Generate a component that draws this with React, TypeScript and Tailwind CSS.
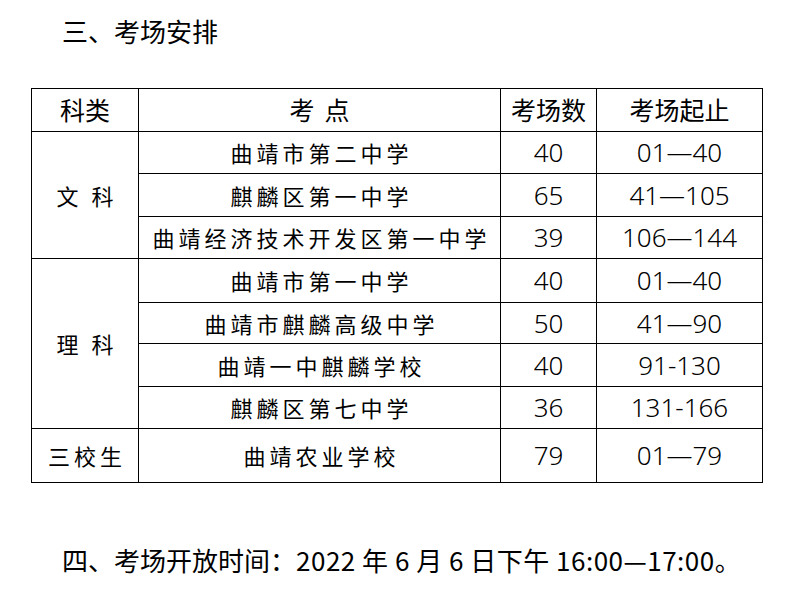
import React from "react";

type Row = { school: string; count: string; range: string };

const groups: { name: string; rows: Row[]; heights: number[] }[] = [
  {
    name: "文 科",
    rows: [
      { school: "曲靖市第二中学", count: "40", range: "01—40" },
      { school: "麒麟区第一中学", count: "65", range: "41—105" },
      { school: "曲靖经济技术开发区第一中学", count: "39", range: "106—144" },
    ],
    heights: [42, 43, 42],
  },
  {
    name: "理 科",
    rows: [
      { school: "曲靖市第一中学", count: "40", range: "01—40" },
      { school: "曲靖市麒麟高级中学", count: "50", range: "41—90" },
      { school: "曲靖一中麒麟学校", count: "40", range: "91-130" },
      { school: "麒麟区第七中学", count: "36", range: "131-166" },
    ],
    heights: [44, 41, 43, 42],
  },
  {
    name: "三校生",
    rows: [{ school: "曲靖农业学校", count: "79", range: "01—79" }],
    heights: [54],
  },
];

const hei = { fontFamily: '"Noto Sans CJK SC", sans-serif' };
// thin digits, like the light face in the screenshot
const digits = { fontFamily: '"Noto Sans", "Noto Sans CJK SC", sans-serif', fontWeight: 300 };

export default function App() {
  return (
    <div className="w-[788px] h-[606px] bg-white text-black" style={hei}>
      <h1 className="pl-[62px] pt-[14px] text-[26px] leading-[34px] font-normal">三、考场安排</h1>

      <table className="ml-[31px] mt-[40px] w-[731px] border-collapse table-fixed">
        <colgroup>
          <col className="w-[107px]" />
          <col className="w-[362px]" />
          <col className="w-[96px]" />
          <col className="w-[166px]" />
        </colgroup>
        <thead>
          <tr className="h-[43px] text-[25px]">
            <th className="border border-black font-normal">科类</th>
            <th className="border border-black font-normal tracking-[10px] pl-[10px]">考点</th>
            <th className="border border-black font-normal">考场数</th>
            <th className="border border-black font-normal">考场起止</th>
          </tr>
        </thead>
        <tbody>
          {groups.map((g) =>
            g.rows.map((r, i) => (
              <tr key={g.name + i} style={{ height: g.heights[i] }}>
                {i === 0 && (
                  <td
                    rowSpan={g.rows.length}
                    className="border border-black text-center text-[22px] tracking-[4px] pl-[4px]"
                  >
                    {g.name}
                  </td>
                )}
                <td className="border border-black text-center text-[22px] tracking-[4px] pl-[4px]">
                  {r.school}
                </td>
                <td className="border border-black text-center text-[26px]" style={digits}>
                  {r.count}
                </td>
                <td className="border border-black text-center text-[26px]" style={digits}>
                  {r.range}
                </td>
              </tr>
            ))
          )}
        </tbody>
      </table>

      <p className="pl-[62px] mt-[60px] text-[26px] leading-[34px] font-normal">
        四、考场开放时间：<span className="tracking-[0.5px]">2022 年 6 月 6 日下午 16:00—17:00。</span>
      </p>
    </div>
  );
}
